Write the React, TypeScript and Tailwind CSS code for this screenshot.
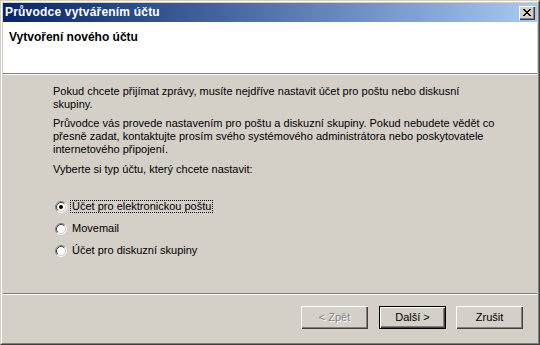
import type { ReactNode } from "react";

function Radio({ checked }: { checked?: boolean }) {
  return (
    <svg width="12" height="12" viewBox="0 0 12 12" className="shrink-0">
      <circle cx="6" cy="6" r="4.5" fill="#ffffff" />
      <path d="M2.11 9.89 A5.5 5.5 0 0 1 9.89 2.11" fill="none" stroke="#808080" strokeWidth="1" />
      <path d="M9.89 2.11 A5.5 5.5 0 0 1 2.11 9.89" fill="none" stroke="#ffffff" strokeWidth="1" />
      <path d="M2.82 9.18 A4.5 4.5 0 0 1 9.18 2.82" fill="none" stroke="#404040" strokeWidth="1" />
      <path d="M9.18 2.82 A4.5 4.5 0 0 1 2.82 9.18" fill="none" stroke="#d4d0c8" strokeWidth="1" />
      {checked && <circle cx="6" cy="6" r="2" fill="#000000" />}
    </svg>
  );
}

function Button({ children, variant }: { children: ReactNode; variant?: "default" | "disabled" }) {
  if (variant === "default") {
    return (
      <div className="w-[67px] h-[23px] flex items-center justify-center border border-black bg-[#d4d0c8] shadow-[inset_1px_1px_#ffffff,inset_-1px_-1px_#404040,inset_-2px_-2px_#808080]">
        {children}
      </div>
    );
  }
  return (
    <div className="w-[67px] h-[23px] flex items-center justify-center bg-[#d4d0c8] shadow-[inset_1px_1px_#ffffff,inset_-1px_-1px_#404040,inset_-2px_-2px_#808080]">
      <span className={variant === "disabled" ? "text-[#808080] [text-shadow:1px_1px_0_#ffffff]" : ""}>{children}</span>
    </div>
  );
}

export default function App() {
  return (
    <div
      className="w-[540px] h-[345px] text-[11px] leading-[13px] text-black bg-[#d4d0c8] border-t border-l border-t-[#d4d0c8] border-l-[#d4d0c8] border-r border-b border-r-[#404040] border-b-[#404040]"
      style={{ fontFamily: '"Liberation Sans", Arial, sans-serif' }}
    >
      <div className="h-full flex flex-col border border-t-white border-l-white border-r-[#808080] border-b-[#808080] p-px">
        {/* Title bar */}
        <div className="h-[19px] shrink-0 flex items-center justify-between pl-[2px] pr-[2px] bg-linear-to-r from-[#0a246a] to-[#a6caf0]">
          <span className="font-bold text-white text-[12px] tracking-[0.2px]">Průvodce vytvářením účtu</span>
          <div className="w-[16px] h-[14px] flex items-center justify-center bg-[#d4d0c8] shadow-[inset_1px_1px_#ffffff,inset_-1px_-1px_#404040,inset_-2px_-2px_#808080]">
            <svg width="8" height="7" viewBox="0 0 8 7" shapeRendering="crispEdges">
              <path d="M0 0h2v1h-2zM6 0h2v1h-2zM1 1h2v1h-2zM5 1h2v1h-2zM2 2h4v1h-4zM3 3h2v1h-2zM2 4h4v1h-4zM1 5h2v1h-2zM5 5h2v1h-2zM0 6h2v1h-2zM6 6h2v1h-2z" fill="#000" />
            </svg>
          </div>
        </div>

        {/* Header */}
        <div className="h-[52px] shrink-0 bg-white pt-[9px] pl-[6px] border-b border-b-[#808080]">
          <div className="font-bold text-[12px]">Vytvoření nového účtu</div>
        </div>
        <div className="h-px shrink-0 bg-white" />

        {/* Body */}
        <div className="flex-1 pt-[10px] pl-[50px]">
          <p className="mb-[6px]">
            <span className="block">Pokud chcete přijímat zprávy, musíte nejdříve nastavit účet pro poštu nebo diskusní</span>
            <span className="block">skupiny.</span>
          </p>
          <p className="mb-[7px]">
            <span className="block">Průvodce vás provede nastavením pro poštu a diskuzní skupiny. Pokud nebudete vědět co</span>
            <span className="block">přesně zadat, kontaktujte prosím svého systémového administrátora nebo poskytovatele</span>
            <span className="block">internetového připojení.</span>
          </p>
          <p>Vyberte si typ účtu, který chcete nastavit:</p>

          <div className="mt-[24px] flex flex-col gap-[9px] pl-[2px]">
            <div className="flex items-center h-[13px]">
              <Radio checked />
              <span className="ml-[3px] border border-dotted border-black px-px leading-[11px]">Účet pro elektronickou poštu</span>
            </div>
            <div className="flex items-center h-[13px]">
              <Radio />
              <span className="ml-[3px] border border-transparent px-px leading-[11px]">Movemail</span>
            </div>
            <div className="flex items-center h-[13px]">
              <Radio />
              <span className="ml-[3px] border border-transparent px-px leading-[11px]">Účet pro diskuzní skupiny</span>
            </div>
          </div>
        </div>

        {/* Separator */}
        <div className="h-px shrink-0 bg-[#808080]" />
        <div className="h-px shrink-0 bg-white" />

        {/* Footer */}
        <div className="h-[47px] shrink-0 flex items-start justify-end pt-[11px] pr-[14px]">
          <Button variant="disabled">&lt; Zpět</Button>
          <div className="ml-[11px]">
            <Button variant="default">Další &gt;</Button>
          </div>
          <div className="ml-[10px]">
            <Button>Zrušit</Button>
          </div>
        </div>
      </div>
    </div>
  );
}
